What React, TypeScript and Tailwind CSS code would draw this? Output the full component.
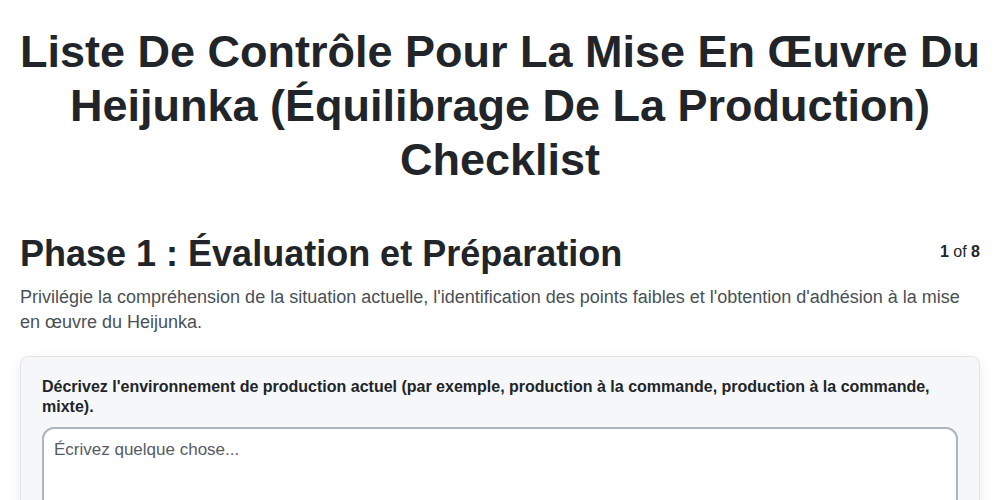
export default function App() {
  return (
    <div className="min-h-screen bg-white px-5 pt-[25px] text-[#212529]" style={{ fontFamily: '"Liberation Sans", Arial, sans-serif' }}>
      <h1 className="-mx-2 text-center text-[45px] font-bold leading-[54px]">
        Liste De Contrôle Pour La Mise En Œuvre Du Heijunka (Équilibrage De La Production) Checklist
      </h1>

      <div className="mt-[45px] flex items-start justify-between">
        <h2 className="text-[36px] font-bold leading-[44px]">Phase 1 : Évaluation et Préparation</h2>
        <p className="mt-[8px] text-[16px] text-[#212529]">
          <span className="font-bold">1</span> of <span className="font-bold">8</span>
        </p>
      </div>

      <p className="mt-[9px] text-[18px] leading-[25px] text-[#495057]">
        Privilégie la compréhension de la situation actuelle, l'identification des points faibles et l'obtention d'adhésion à la mise en œuvre du Heijunka.
      </p>

      <div className="mt-[21px] rounded-lg border border-[#e3e5e8] bg-[#f6f7f9] px-[21px] pt-[20px] pb-5 shadow-[0_4px_14px_rgba(0,0,0,0.08)]">
        <label className="block text-[16px] font-bold leading-[20px] text-[#212529]">
          Décrivez l'environnement de production actuel (par exemple, production à la commande, production à la commande, mixte).
        </label>
        <textarea
          className="mt-[10px] block h-[100px] w-full resize-none rounded-xl border-2 border-[#adb5bd] bg-white px-[10px] py-[8px] text-[17px] text-[#212529] placeholder-[#555b66] outline-none"
          placeholder="Écrivez quelque chose..."
          style={{ fontFamily: '"Liberation Sans", Arial, sans-serif' }}
        />
      </div>
    </div>
  )
}
